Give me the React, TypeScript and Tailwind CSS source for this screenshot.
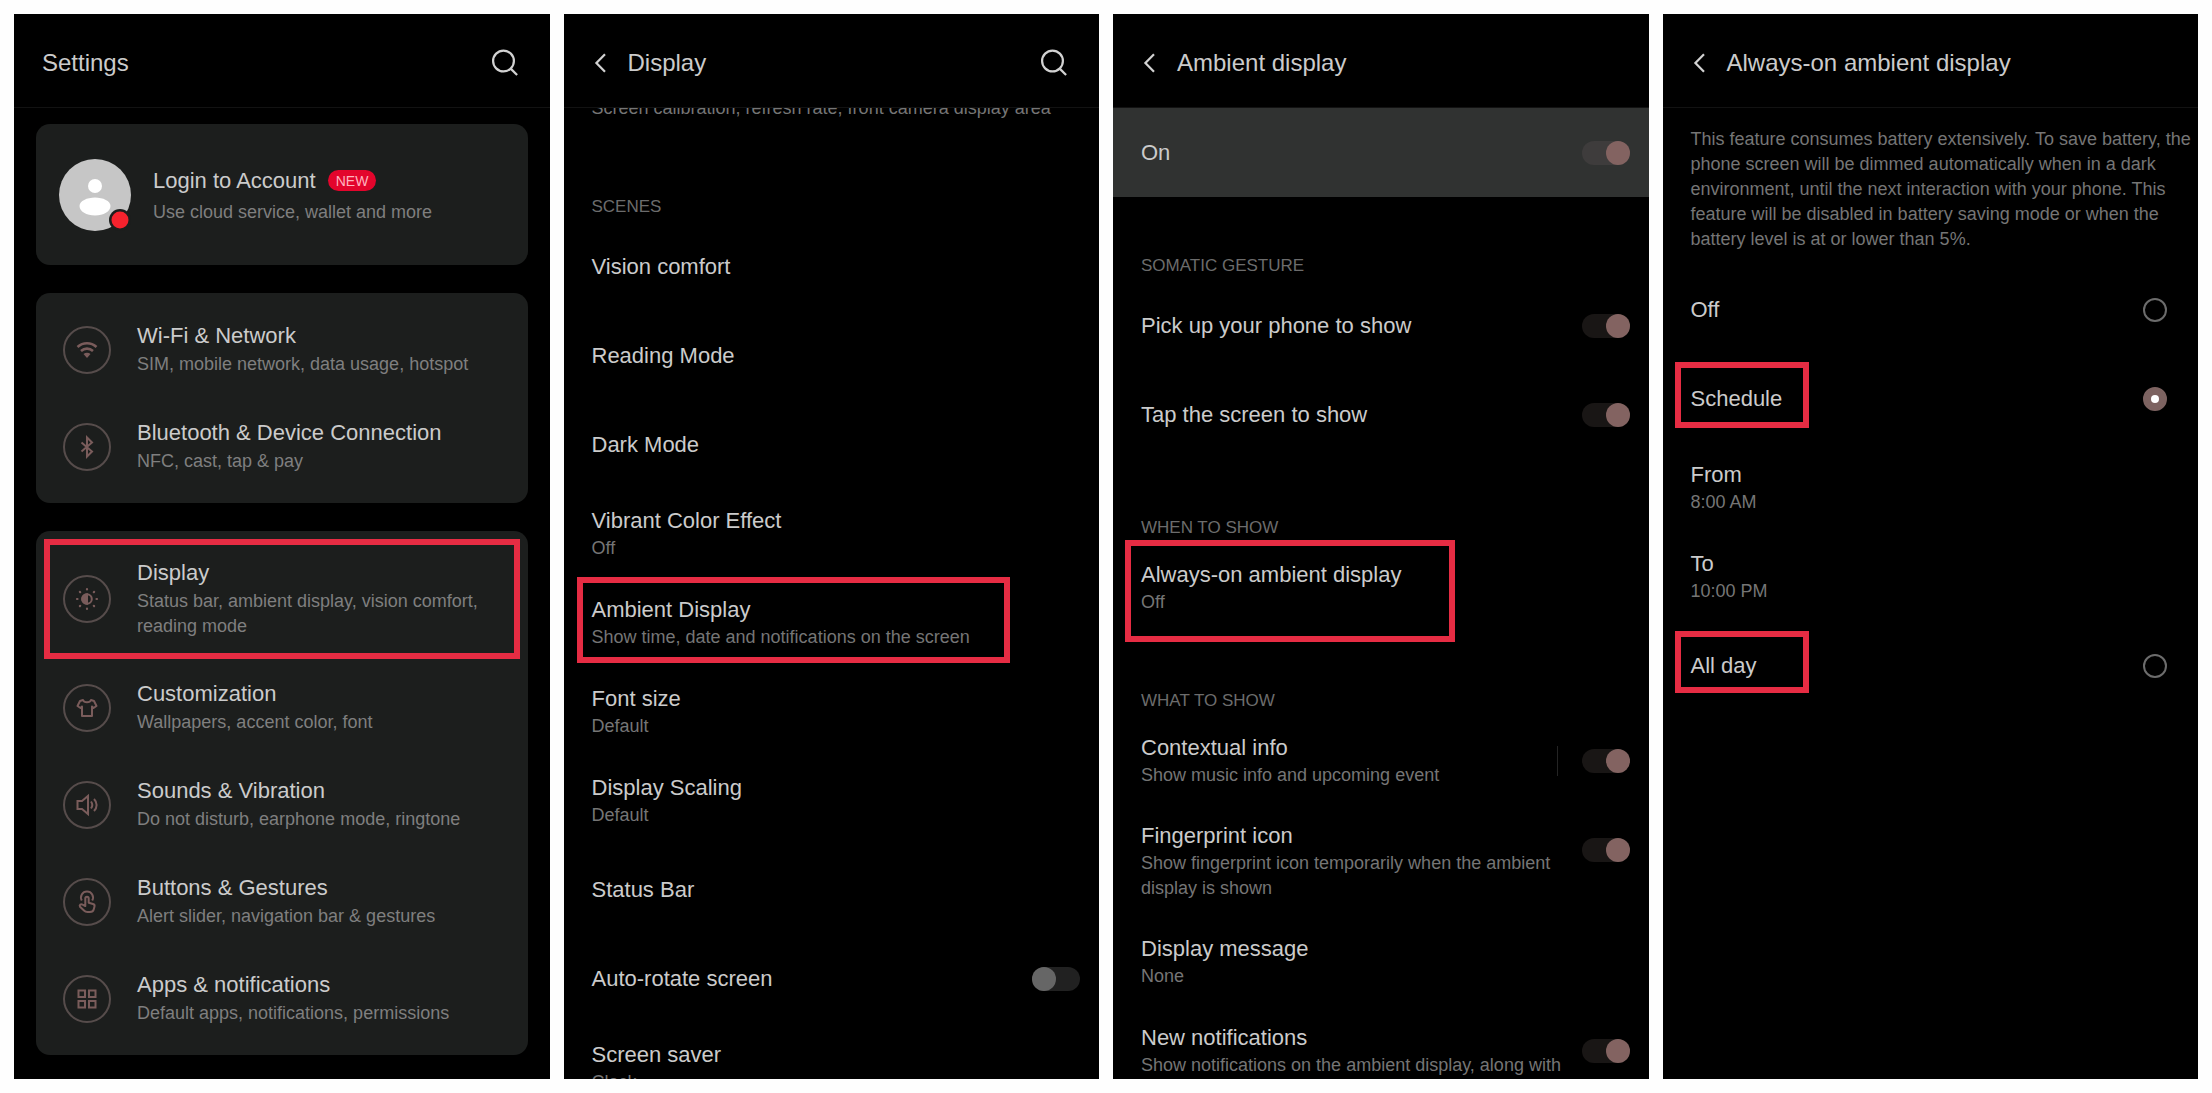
import type { ReactNode } from "react";

const Toggle: React.FC<{ id: string; on?: boolean; lit?: boolean }> = (props) => {
  return (
    <input
      id={props.id}
      type="checkbox"
      role="switch"
      defaultChecked={props.on}
      className={`flex h-6 w-12 shrink-0 appearance-none rounded-full bg-[#212121] before:size-6 before:rounded-full before:bg-[#666666] checked:justify-end checked:before:bg-[#836361] ${
        props.lit ? "checked:bg-[#3e3c3c]" : "checked:bg-[#191615]"
      }`}
    />
  );
};

const Radio: React.FC<{ id: string; on?: boolean }> = (props) => {
  return (
    <input
      id={props.id}
      type="radio"
      name="always-on"
      defaultChecked={props.on}
      className="mr-3 flex size-6 shrink-0 appearance-none items-center justify-center rounded-full border-2 border-[#6c6c6c] before:size-2 before:rounded-full checked:border-[#7d6361] checked:bg-[#7d6361] checked:before:bg-white"
    />
  );
};

// red frame drawn over a row
const Highlight: React.FC<{ className: string }> = (props) => {
  return (
    <div
      className={`pointer-events-none absolute border-6 border-[#e62c43] ${props.className}`}
    />
  );
};

const SearchButton = () => {
  return (
    <button type="button" aria-label="Search" className="ml-auto">
      <svg
        className="size-[30px]"
        viewBox="0 0 30 30"
        fill="none"
        stroke="#d2d2d2"
        strokeWidth="2.2"
      >
        <circle cx="13.500" cy="13" r="10.4" />
        <path d="M20.700 20.600 27.100 27" />
      </svg>
    </button>
  );
};

const Phone: React.FC<{
  title: string;
  back?: boolean;
  search?: boolean;
  children: ReactNode;
}> = (props) => {
  return (
    <section className="flex min-h-0 min-w-0 flex-col overflow-hidden bg-black">
      <header className="flex h-[94px] shrink-0 items-center border-b border-[#121212] pt-1 pr-[30px] pl-7">
        {props.back && (
          <button type="button" aria-label="Back" className="mr-[22px] ml-0.5">
            <svg
              className="h-5 w-3"
              viewBox="0 0 12 20"
              fill="none"
              stroke="#d2d2d2"
              strokeWidth="2.2"
            >
              <path d="M11 1.2 2.4 10l8.6 8.8" />
            </svg>
          </button>
        )}
        <h1 className="text-2xl">{props.title}</h1>
        {props.search && <SearchButton />}
      </header>
      <div className="flex min-h-0 flex-1 flex-col overflow-hidden">
        {props.children}
      </div>
    </section>
  );
};

const SectionTitle: React.FC<{ children: ReactNode }> = (props) => {
  return (
    <h2 className="shrink-0 pt-14 pb-[3px] pl-7 text-[17px] leading-[25px] text-[#6c6c6c]">
      {props.children}
    </h2>
  );
};

const Row: React.FC<{
  title: string;
  sub?: string;
  htmlFor?: string;
  control?: ReactNode;
  className?: string;
  children?: ReactNode;
}> = (props) => {
  return (
    <div
      className={`relative flex min-h-[89px] shrink-0 items-start pr-[19px] pl-7 ${props.className ?? ""}`}
    >
      <div className="flex min-h-[89px] min-w-0 flex-1 flex-col justify-center py-4">
        {props.htmlFor ? (
          <label htmlFor={props.htmlFor} className="text-[22px] leading-[30px]">
            {props.title}
          </label>
        ) : (
          <a href="#" className="text-[22px] leading-[30px]">
            {props.title}
          </a>
        )}
        {props.sub && (
          <p className="text-lg leading-[25px] text-[#757575]">{props.sub}</p>
        )}
      </div>
      {props.control && (
        <div className="flex h-[89px] items-center">{props.control}</div>
      )}
      {props.children}
    </div>
  );
};

const Glyph: React.FC<{ children: ReactNode }> = (props) => {
  return (
    <span className="flex size-12 shrink-0 items-center justify-center rounded-full border-2 border-[#564c4b]">
      <svg
        className="size-6"
        viewBox="0 0 24 24"
        fill="none"
        stroke="#7a5c5b"
        strokeWidth="2"
      >
        {props.children}
      </svg>
    </span>
  );
};

const MenuRow: React.FC<{
  title: string;
  sub: string;
  icon: ReactNode;
  selected?: boolean;
}> = (props) => {
  return (
    <a
      href="#"
      className={`flex items-center gap-[26px] px-[19px] ${
        props.selected
          ? "h-[120px] outline-6 -outline-offset-6 outline-[#e62c43]"
          : "h-[97px]"
      }`}
    >
      <Glyph>{props.icon}</Glyph>
      <span className="flex flex-col pb-0.5">
        <span className="text-[22px] leading-8">{props.title}</span>
        <span className="text-lg leading-[25px] text-[#7f7f7f]">{props.sub}</span>
      </span>
    </a>
  );
};

const Card: React.FC<{ children: ReactNode }> = (props) => {
  return (
    <div className="shrink-0 rounded-[14px] bg-[#1c1e1d] p-2">{props.children}</div>
  );
};

const SettingsPhone = () => {
  return (
    <Phone title="Settings" search>
      <div className="flex flex-col gap-7 px-[22px] pt-4">
        <Card>
          <a href="#" className="flex h-[125px] items-center gap-[22px] pl-[15px]">
            <svg className="size-[72px] shrink-0" viewBox="0 0 72 72">
              <circle cx="36" cy="36" r="36" fill="#c6c6c6" />
              <circle cx="36" cy="27" r="7" fill="#fff" />
              <path
                fill="#fff"
                d="M36 38.500c8 0 15.500 3.500 15.500 8.500 0 5.500-7 9.500-15.500 9.500s-15.500-4-15.500-9.500c0-5 7.500-8.500 15.500-8.500Z"
              />
              <circle cx="61" cy="61" r="11" fill="#1c1e1d" />
              <circle cx="61" cy="61" r="8.500" fill="#f5222d" />
            </svg>
            <span className="flex flex-col gap-[3px]">
              <span className="flex items-center gap-3 text-[22px] leading-8">
                Login to Account
                <span className="flex h-[21px] items-center rounded-full bg-[#e3052c] px-2 text-sm text-[#ffb3bf]">
                  NEW
                </span>
              </span>
              <span className="text-lg leading-[25px] text-[#7f7f7f]">
                Use cloud service, wallet and more
              </span>
            </span>
          </a>
        </Card>
        <Card>
          <MenuRow
            title="Wi-Fi & Network"
            sub="SIM, mobile network, data usage, hotspot"
            icon={
              <>
                <path d="M2.500 9c5.500-5 13.500-5 19 0" strokeWidth="2.600" />
                <path d="M6 13c3.500-3.200 8.500-3.200 12 0" strokeWidth="2.600" />
                <path d="M8.500 16c2-1.700 5-1.700 7 0L12 20Z" fill="#7a5c5b" stroke="none" />
              </>
            }
          />
          <MenuRow
            title="Bluetooth & Device Connection"
            sub="NFC, cast, tap & pay"
            icon={<path d="M6.500 7.500 17 16.500 12 21.500V2.500L17 7.500 6.500 16.500" />}
          />
        </Card>
        <Card>
          <MenuRow
            selected
            title="Display"
            sub="Status bar, ambient display, vision comfort, reading mode"
            icon={
              <>
                <circle cx="12" cy="12" r="4.800" />
                <path d="M12 7.200a4.800 4.800 0 0 0 0 9.600Z" fill="#7a5c5b" />
                <path
                  strokeWidth="2.200"
                  strokeLinecap="round"
                  d="M12 2v.5M12 21.500v.5M2 12h.5M21.500 12h.5M4.900 4.900l.3.3M18.800 18.800l.3.3M4.900 19.100l.3-.3M18.800 5.200l.3-.3"
                />
              </>
            }
          />
          <MenuRow
            title="Customization"
            sub="Wallpapers, accent color, font"
            icon={
              <path
                strokeLinejoin="round"
                d="M8 4C9 7 15 7 16 4l3 1 2.500 5-3 2-1.500-1.500V20H7v-9.500L5.500 12l-3-2L5 5Z"
              />
            }
          />
          <MenuRow
            title="Sounds & Vibration"
            sub="Do not disturb, earphone mode, ringtone"
            icon={
              <path d="M2.500 8H7l6-5v18l-6-5H2.500ZM16 8.500c1.500 2 1.500 5 0 7M19 6c3.500 3.500 3.500 8.500 0 12" />
            }
          />
          <MenuRow
            title="Buttons & Gestures"
            sub="Alert slider, navigation bar & gestures"
            icon={
              <path
                strokeLinejoin="round"
                d="M6.800 10.500a6 6 0 1 1 10.400 0M10.300 16V8.500c0-2.300 3.400-2.300 3.400 0v4.200l4.300 1.300c1.300.4 1.800 1.300 1.500 2.500l-.8 3c-.4 1.500-1.800 2.500-3.700 2.500h-2.500c-1.500 0-2.500-.4-3.500-1.500L5 16.700c-1-1.800 1-3 2.500-2Z"
              />
            }
          />
          <MenuRow
            title="Apps & notifications"
            sub="Default apps, notifications, permissions"
            icon={
              <path d="M3.500 3.500h6.500v6.500h-6.500ZM14 3.500h6.500v6.500H14ZM3.500 14h6.500v6.500h-6.500ZM14 14h6.500v6.500H14Z" />
            }
          />
        </Card>
      </div>
    </Phone>
  );
};

const DisplayPhone = () => {
  return (
    <Phone title="Display" back search>
      {/* the list is scrolled, so the first caption is cut by the header */}
      <p className="-mt-3 shrink-0 pb-[17px] pl-7 text-lg leading-[25px] whitespace-nowrap text-[#757575]">
        Screen calibration, refresh rate, front camera display area
      </p>
      <SectionTitle>SCENES</SectionTitle>
      <Row title="Vision comfort" />
      <Row title="Reading Mode" />
      <Row title="Dark Mode" />
      <Row title="Vibrant Color Effect" sub="Off" />
      <Row title="Ambient Display" sub="Show time, date and notifications on the screen">
        <Highlight className="-top-px left-[13px] h-[86px] w-[433px]" />
      </Row>
      <Row title="Font size" sub="Default" />
      <Row title="Display Scaling" sub="Default" />
      <Row title="Status Bar" />
      <Row
        title="Auto-rotate screen"
        htmlFor="auto-rotate"
        control={<Toggle id="auto-rotate" />}
      />
      <Row title="Screen saver" sub="Clock" />
    </Phone>
  );
};

const AmbientPhone = () => {
  return (
    <Phone title="Ambient display" back>
      <Row
        title="On"
        htmlFor="ambient-on"
        className="bg-[#303231]"
        control={<Toggle id="ambient-on" on lit />}
      />
      <SectionTitle>SOMATIC GESTURE</SectionTitle>
      <Row
        title="Pick up your phone to show"
        htmlFor="pick-up"
        control={<Toggle id="pick-up" on />}
      />
      <Row
        title="Tap the screen to show"
        htmlFor="tap-screen"
        control={<Toggle id="tap-screen" on />}
      />
      <SectionTitle>WHEN TO SHOW</SectionTitle>
      <Row title="Always-on ambient display" sub="Off">
        <Highlight className="-top-[3px] left-3 h-[102px] w-[330px]" />
      </Row>
      <SectionTitle>WHAT TO SHOW</SectionTitle>
      <Row
        title="Contextual info"
        sub="Show music info and upcoming event"
        htmlFor="contextual"
        control={
          <div className="flex h-[30px] items-center border-l border-[#242424] pl-6">
            <Toggle id="contextual" on />
          </div>
        }
      />
      <Row
        title="Fingerprint icon"
        sub="Show fingerprint icon temporarily when the ambient display is shown"
        htmlFor="fingerprint"
        control={<Toggle id="fingerprint" on />}
      />
      <Row title="Display message" sub="None" />
      <Row
        title="New notifications"
        sub="Show notifications on the ambient display, along with"
        htmlFor="new-notifications"
        control={<Toggle id="new-notifications" on />}
      />
    </Phone>
  );
};

const AlwaysOnPhone = () => {
  return (
    <Phone title="Always-on ambient display" back>
      <p className="shrink-0 pt-[19px] pb-[13px] pl-7 text-lg leading-[25px] text-[#757575]">
        This feature consumes battery extensively. To save battery, the phone
        screen will be dimmed automatically when in a dark environment, until
        the next interaction with your phone. This feature will be disabled in
        battery saving mode or when the battery level is at or lower than 5%.
      </p>
      <Row title="Off" htmlFor="off" control={<Radio id="off" />} />
      <Row title="Schedule" htmlFor="schedule" control={<Radio id="schedule" on />}>
        <Highlight className="top-2 left-3 h-[66px] w-[134px]" />
      </Row>
      <Row title="From" sub="8:00 AM" />
      <Row title="To" sub="10:00 PM" />
      <Row title="All day" htmlFor="all-day" control={<Radio id="all-day" />}>
        <Highlight className="top-2.5 left-3 h-[62px] w-[134px]" />
      </Row>
    </Phone>
  );
};

const App = () => {
  return (
    <main className="grid h-screen grid-cols-4 grid-rows-1 gap-3.5 bg-[#fefefe] p-3.5 font-['Liberation_Sans',Arial,sans-serif] text-[#cbcbcb]">
      <SettingsPhone />
      <DisplayPhone />
      <AmbientPhone />
      <AlwaysOnPhone />
    </main>
  );
};

export default App;
